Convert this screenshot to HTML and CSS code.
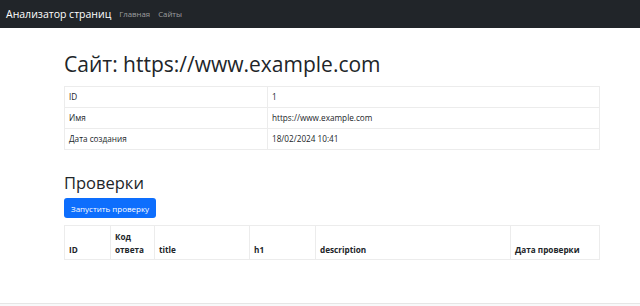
FILE: index.html
```html
<!DOCTYPE html>
<html lang="ru">
<head>
  <meta charset="UTF-8">
  <meta name="viewport" content="width=device-width, initial-scale=1.0">
  <title>Анализатор страниц</title>
  <link rel="stylesheet" href="styles.css">
</head>
<body>
  <nav class="navbar">
    <a class="brand" href="#">Анализатор страниц</a>
    <a class="nav-link" href="#">Главная</a>
    <a class="nav-link" href="#">Сайты</a>
  </nav>
  <main class="container">
    <h1>Сайт: https://www.example.com</h1>
    <table class="table info">
      <tr><td class="key">ID</td><td>1</td></tr>
      <tr><td class="key">Имя</td><td>https://www.example.com</td></tr>
      <tr><td class="key">Дата создания</td><td>18/02/2024 10:41</td></tr>
    </table>
    <h2>Проверки</h2>
    <button class="btn">Запустить проверку</button>
    <table class="table checks">
      <tr>
        <th class="c-id">ID</th>
        <th class="c-code">Код<br>ответа</th>
        <th class="c-title">title</th>
        <th class="c-h1">h1</th>
        <th class="c-desc">description</th>
        <th class="c-date">Дата проверки</th>
      </tr>
    </table>
  </main>
  <footer class="footer"></footer>
</body>
</html>
```

FILE: styles.css
```css
body {
  margin: 0;
  font-family: 'Open Sans', sans-serif;
  color: #212529;
  background: #fff;
  height: 306px;
  display: flex;
  flex-direction: column;
}
a {
  text-decoration: none;
}
.navbar {
  background-color: #212529;
  height: 28px;
  display: flex;
  align-items: center;
  padding: 0 6px;
}
.brand {
  color: #fff;
  font-size: 10.5px;
  font-weight: 500;
  margin-right: 8px;
}
.nav-link {
  color: rgba(255, 255, 255, 0.55);
  font-size: 7.8px;
  margin-right: 8px;
}
.container {
  padding: 0 40px 0 64px;
  flex: 1;
}
h1 {
  font-size: 21px;
  font-weight: 500;
  margin: 24px 0 9px;
  line-height: 25px;
}
h2 {
  font-size: 16.5px;
  font-weight: 500;
  margin: 23px 0 5px;
  line-height: 20px;
}
.table {
  width: 536px;
  border-collapse: collapse;
  font-size: 8.2px;
}
.table td,
.table th {
  border: 1px solid #ececec;
  padding: 4px;
  line-height: 12px;
  text-align: left;
}
.info .key {
  width: 194px;
}
.btn {
  display: block;
  background: #0d6efd;
  color: #fff;
  border: none;
  border-radius: 3px;
  font-family: inherit;
  font-size: 8px;
  height: 20px;
  padding: 0 7px;
  margin-bottom: 7px;
}
.checks th {
  font-weight: bold;
  vertical-align: bottom;
  padding: 4px 4px 3px;
  line-height: 13px;
}
.c-id { width: 37px; }
.c-code { width: 35px; }
.c-title { width: 86px; }
.c-h1 { width: 57px; }
.c-desc { width: 186px; }
.footer {
  height: 2px;
  border-top: 1px solid #e6e6e6;
  background: #f8f9fa;
}
```
